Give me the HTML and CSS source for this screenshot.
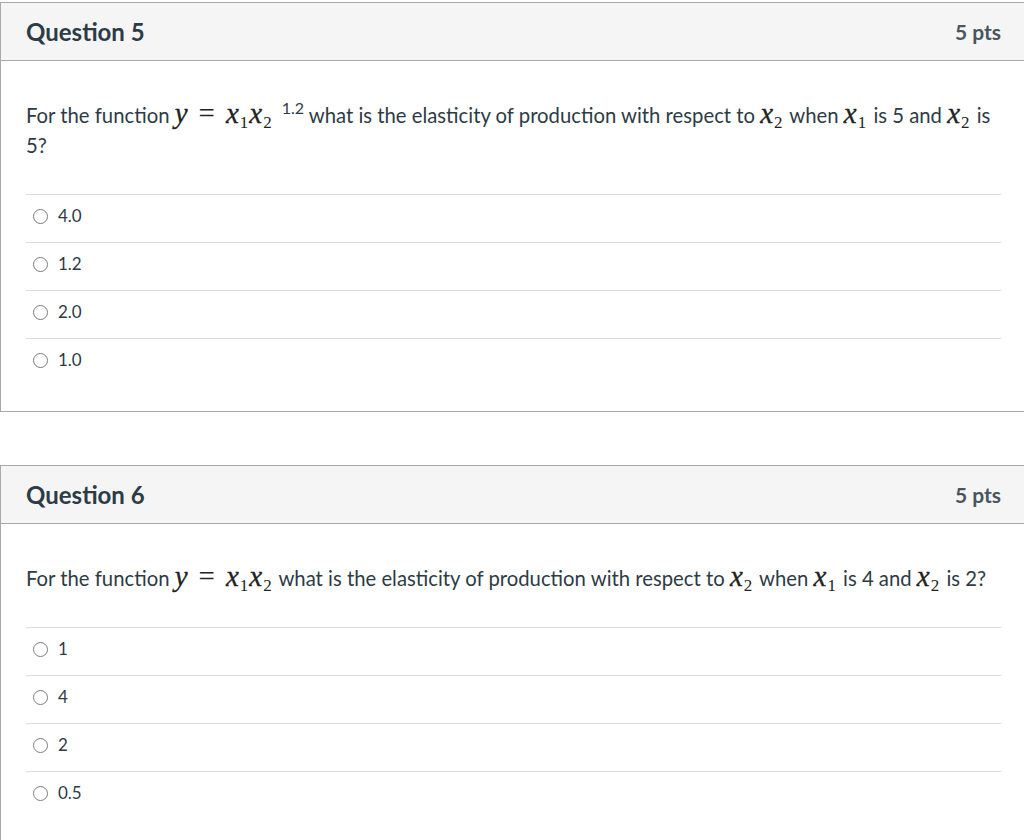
FILE: index.html
```html
<!DOCTYPE html>
<html>
<head>
<meta charset="utf-8">
<link rel="stylesheet" href="styles.css">
</head>
<body>
<div class="page">
  <div class="question">
    <div class="q-header">
      <span class="q-title">Question 5</span>
      <span class="q-pts">5 pts</span>
    </div>
    <div class="q-body">
      <div class="q-text">For the function <span class="math"><i>y</i><span class="eq">=</span><i>x</i><sub>1</sub><i>x</i><sub>2</sub></span><sup class="pow">1.2</sup> what is the elasticity of production with respect to <span class="math"><i>x</i><sub>2</sub></span> when <span class="math"><i>x</i><sub>1</sub></span> is 5 and <span class="math"><i>x</i><sub>2</sub></span> is 5?</div>
      <ul class="answers">
        <li class="answer"><span class="radio"></span><span class="a-text">4.0</span></li>
        <li class="answer"><span class="radio"></span><span class="a-text">1.2</span></li>
        <li class="answer"><span class="radio"></span><span class="a-text">2.0</span></li>
        <li class="answer"><span class="radio"></span><span class="a-text">1.0</span></li>
      </ul>
    </div>
  </div>
  <div class="question">
    <div class="q-header">
      <span class="q-title">Question 6</span>
      <span class="q-pts">5 pts</span>
    </div>
    <div class="q-body">
      <div class="q-text">For the function <span class="math"><i>y</i><span class="eq">=</span><i>x</i><sub>1</sub><i>x</i><sub>2</sub></span> what is the elasticity of production with respect to <span class="math"><i>x</i><sub>2</sub></span> when <span class="math"><i>x</i><sub>1</sub></span> is 4 and <span class="math"><i>x</i><sub>2</sub></span> is 2?</div>
      <ul class="answers">
        <li class="answer"><span class="radio"></span><span class="a-text">1</span></li>
        <li class="answer"><span class="radio"></span><span class="a-text">4</span></li>
        <li class="answer"><span class="radio"></span><span class="a-text">2</span></li>
        <li class="answer"><span class="radio"></span><span class="a-text">0.5</span></li>
      </ul>
    </div>
  </div>
</div>
</body>
</html>
```

FILE: styles.css
```css
html, body {
  margin: 0;
  padding: 0;
  background: #ffffff;
  overflow: hidden;
}
body {
  font-family: Lato, "Noto Sans", sans-serif;
  color: #2d3b45;
}
.page {
  padding-top: 2px;
  display: flex;
  flex-direction: column;
  gap: 53px;
}
.question {
  width: 1026px;
  box-sizing: border-box;
  border: 1px solid #a9a9a9;
  background: #ffffff;
}
.q-header {
  height: 57px;
  background: #f5f5f5;
  border-bottom: 1px solid #a9a9a9;
  display: flex;
  align-items: center;
  justify-content: space-between;
  padding: 0 24px 0 25px;
}
.q-title {
  font-size: 24px;
  font-weight: 700;
  color: #2d3b45;
}
.q-pts {
  font-size: 21px;
  font-weight: 700;
  color: #4a565e;
}
.q-body {
  padding: 0 24px 25px 25px;
}
.q-text {
  padding-top: 39px;
  font-size: 20.3px;
  line-height: 30px;
  margin-bottom: 34px;
}
.math {
  font-family: "Liberation Serif", "Times New Roman", serif;
  font-size: 29px;
  line-height: 0;
  color: #222;
  margin-right: 1px;
}
.math i {
  font-style: italic;
  -webkit-text-stroke: 0.3px #222;
}
.math sub {
  font-size: 17px;
  font-style: normal;
  vertical-align: -5px;
  line-height: 0;
  margin-left: 1px;
  margin-right: 1px;
}
.eq {
  margin: 0 11px 0 11px;
}
.pow {
  font-size: 16px;
  vertical-align: 9px;
  line-height: 0;
  margin-left: 8px;
}
.answers {
  list-style: none;
  margin: 0;
  padding: 0;
}
.answer {
  border-top: 1px solid #dcdcdc;
  padding: 9px 0 14px 0;
  height: 24px;
  display: flex;
  align-items: center;
}
.radio {
  width: 13px;
  height: 13px;
  border: 1px solid #7d7d7d;
  border-radius: 50%;
  margin-left: 7px;
  margin-right: 10px;
  flex: none;
}
.a-text {
  font-size: 17px;
  line-height: 24px;
}
```
